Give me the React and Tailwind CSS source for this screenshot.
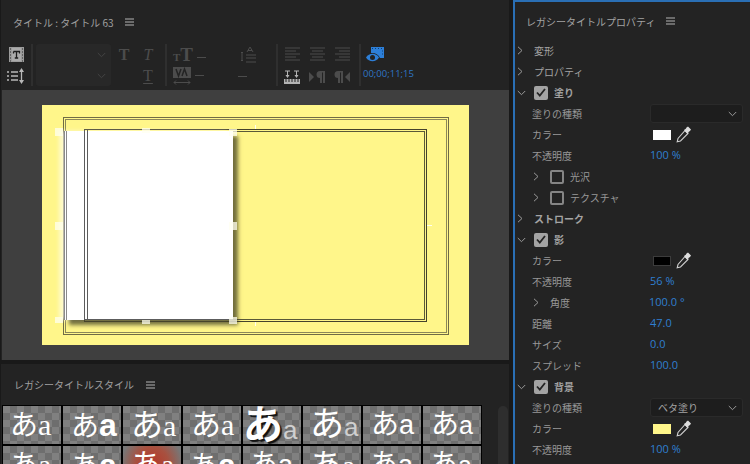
import React from 'react';

const JP = { fontFamily: '"Noto Sans CJK JP", "Noto Sans", sans-serif' };
const OPEN = { fontFamily: '"Open Sans", sans-serif' };
const SERIF = { fontFamily: '"Liberation Serif", serif' };

const Menu = () => (
  <svg width="9" height="8" viewBox="0 0 9 8" className="shrink-0">
    <path d="M0 1h9M0 4h9M0 7h9" stroke="#b4b4b4" strokeWidth="1" fill="none" />
  </svg>
);

const ChevronRight = ({ className = '' }) => (
  <svg width="6" height="9" viewBox="0 0 6 9" className={className}>
    <path d="M1 .8l4 3.7-4 3.7" stroke="#9a9a9a" strokeWidth="1" fill="none" />
  </svg>
);

const ChevronDown = ({ className = '', color = '#9a9a9a' }) => (
  <svg width="9" height="6" viewBox="0 0 9 6" className={className}>
    <path d="M.8 1l3.700 3.700L8.200 1" stroke={color} strokeWidth="1" fill="none" />
  </svg>
);

const Checkbox = () => (
  <span className="w-[14px] h-[14px] rounded-[2px] bg-[#a3a3a3] flex items-center justify-center shrink-0">
    <svg width="10" height="9" viewBox="0 0 10 9">
      <path d="M1 4.500l2.800 3L9 1" stroke="#232323" strokeWidth="1.800" fill="none" />
    </svg>
  </span>
);

const EmptyBox = () => (
  <span className="w-[14px] h-[14px] rounded-[2px] border-2 border-[#858585] shrink-0" />
);

const Eyedropper = () => (
  <svg width="16" height="17" viewBox="0 0 16 17" className="ml-[5px] shrink-0">
    <path d="M9 4.500l3 3-7.500 7.500-3.300 .8.800-3.300z" stroke="#cfcfcf" strokeWidth="1.100" fill="#232323" />
    <path d="M8 4l1.800-1.300.7-1.200 1.500-1 3 3-1 1.500-1.200.7L11.500 8z" fill="#dcdcdc" />
  </svg>
);

// one row of the property panel, 21px high
const Row = ({ children }) => <div className="h-[21px] flex items-center relative">{children}</div>;

const Label = ({ children, indent = 'pl-[17px]' }) => (
  <span className={`${indent} w-[135px] shrink-0 text-[10px] text-[#989898] whitespace-nowrap`}>{children}</span>
);

const Value = ({ children }) => (
  <span className="text-[11px] text-[#2f7fd0]" style={OPEN}>{children}</span>
);

const Section = ({ children, open, bold }) => (
  <Row>
    {open ? <ChevronDown className="ml-[2px] mr-[8px]" /> : <ChevronRight className="ml-[2px] mr-[11px]" />}
    <span className={`text-[10px] whitespace-nowrap text-[#a4a4a4] ${bold ? 'font-bold' : ''}`}>{children}</span>
  </Row>
);

const CheckSection = ({ children }) => (
  <Row>
    <ChevronDown className="ml-[2px] mr-[8px]" />
    <Checkbox />
    <span className="ml-[6px] text-[10px] font-bold text-[#a0a0a0]">{children}</span>
  </Row>
);

const SubCheck = ({ children }) => (
  <Row>
    <ChevronRight className="ml-[18px] mr-[11px]" />
    <EmptyBox />
    <span className="ml-[6px] text-[10px] text-[#989898]">{children}</span>
  </Row>
);

const Select = ({ children }) => (
  <div className="w-[93px] h-[19px] rounded-[3px] bg-[#1d1d1d] border border-[#2a2a2a] flex items-center justify-between pl-[7px] pr-[5px]">
    <span className="text-[10px] text-[#a4a4a4]">{children}</span>
    <ChevronDown />
  </div>
);

const ColorRow = ({ swatch }) => (
  <Row>
    <Label>カラー</Label>
    <span className={`ml-[3px] w-[18px] h-[10px] ${swatch}`} />
    <Eyedropper />
  </Row>
);

const ValueRow = ({ label, value }) => (
  <Row>
    <Label>{label}</Label>
    <Value>{value}</Value>
  </Row>
);

const Properties = () => (
  <aside className="w-[237px] h-[464px] overflow-hidden shrink-0 bg-[#232323] border-l-2 border-t-2 border-[#2a6fb5]" style={JP}>
    <div className="h-[38px] flex items-center pl-[11px] gap-[11px]">
      <span className="text-[10px] text-[#a4a4a4] whitespace-nowrap">レガシータイトルプロパティ</span>
      <Menu />
    </div>
    <Section>変形</Section>
    <Section>プロパティ</Section>
    <CheckSection>塗り</CheckSection>
    <Row><Label>塗りの種類</Label><Select /></Row>
    <ColorRow swatch="bg-white" />
    <ValueRow label="不透明度" value="100 %" />
    <SubCheck>光沢</SubCheck>
    <SubCheck>テクスチャ</SubCheck>
    <Section bold>ストローク</Section>
    <CheckSection>影</CheckSection>
    <ColorRow swatch="bg-black border border-[#3c3c3c]" />
    <ValueRow label="不透明度" value="56 %" />
    <Row>
      <ChevronRight className="ml-[18px] mr-[11px]" />
      <span className="w-[99px] text-[10px] text-[#989898]">角度</span>
      <Value>100.0 °</Value>
    </Row>
    <ValueRow label="距離" value="47.0" />
    <ValueRow label="サイズ" value="0.0" />
    <ValueRow label="スプレッド" value="100.0" />
    <CheckSection>背景</CheckSection>
    <Row><Label>塗りの種類</Label><Select>ベタ塗り</Select></Row>
    <ColorRow swatch="bg-[#fff68a]" />
    <ValueRow label="不透明度" value="100 %" />
    <SubCheck>{''}</SubCheck>
  </aside>
);

const AlignLines = ({ d }) => (
  <svg width="15" height="14" viewBox="0 0 15 14">
    <path d={d} stroke="#4c4c4c" strokeWidth="1" fill="none" />
  </svg>
);

const Divider = ({ className = '' }) => <div className={`w-[2px] h-[42px] bg-[#2f2f2f] shrink-0 ${className}`} />;

const Toolbar = () => (
  <div className="h-[46px] flex items-start pl-[6px]">
    {/* film + list */}
    <div className="w-[18px] shrink-0 flex flex-col items-center pt-[3px] gap-[6px]">
      <svg width="15" height="15" viewBox="0 0 15 15">
        <rect width="15" height="15" fill="#9c9c9c" />
        <rect x="3" y="1" width="9" height="13" fill="#ababab" />
        <path d="M4.500 4.500h6v2M4.500 4.500v2M7.500 4.500v6.500M5.800 11h3.400" stroke="#1d1d1d" strokeWidth="1.300" fill="none" />
        <path d="M1 2h1M1 5h1M1 8h1M1 11h1M1 14h1M13 2h1M13 5h1M13 8h1M13 11h1M13 14h1" stroke="#2a2a2a" strokeWidth="1.200" />
      </svg>
      <svg width="18" height="16" viewBox="0 0 18 16">
        <path d="M0 4h2M0 8h2M0 12h2M4 4h7M4 8h7M4 12h7M14.500 2v12" stroke="#b8b8b8" strokeWidth="1.300" fill="none" />
        <path d="M12 4l2.500-4L17 4zM12 12l2.500 4 2.500-4z" fill="#b8b8b8" />
      </svg>
    </div>
    <Divider className="ml-[6px]" />
    <div className="ml-[3px] w-[75px] h-[42px] shrink-0 rounded-[3px] bg-[#282828] flex flex-col justify-around items-end pr-[5px]">
      <ChevronDown color="#444444" />
      <ChevronDown color="#444444" />
    </div>
    <div className="w-[48px] shrink-0 ml-[1px] grid grid-cols-2 text-center text-[16px] font-bold leading-[21px] text-[#4c4c4c]" style={SERIF}>
      <span>T</span>
      <span className="italic font-normal">T</span>
      <span />
      <span className="font-normal underline underline-offset-[2px]">T</span>
    </div>
    <Divider className="ml-[5px]" />
    <div className="ml-[6px] w-[40px] shrink-0 flex flex-col gap-[3px]">
      <div className="flex items-end h-[19px] font-bold leading-none text-[#4c4c4c]" style={SERIF}>
        <span className="text-[11px]">T</span>
        <span className="text-[19px] leading-[17px]">T</span>
        <span className="ml-[4px] mb-[5px] w-[9px] h-[1px] bg-[#4c4c4c]" />
      </div>
      <div className="flex items-center h-[19px]">
        <svg width="18" height="18" viewBox="0 0 18 18">
          <rect width="18" height="11" fill="#4c4c4c" />
          <path d="M3 2l2.500 7L8 2M9 9l2.500-7L14 9" stroke="#232323" strokeWidth="1.500" fill="none" />
          <path d="M1 15.500h16M3 13.500l-2 2 2 2M15 13.500l2 2-2 2" stroke="#4c4c4c" fill="none" />
        </svg>
        <span className="ml-[4px] w-[9px] h-[1px] bg-[#4c4c4c]" />
      </div>
    </div>
    <div className="ml-[25px] w-[27px] shrink-0 flex flex-col items-start">
      <svg width="16" height="18" viewBox="0 0 16 18" className="ml-[3px] mt-[1px]">
        <path d="M1 7v9M0 8l1-1 1 1M0 15l1 1 1-1M6 7l3-5 3 5M7 5.500h4M5 10h10M5 13h10M5 17h10" stroke="#4c4c4c" fill="none" />
      </svg>
      <span className="w-[9px] h-[1px] bg-[#4c4c4c] mt-[13px]" />
    </div>
    <Divider className="ml-[11px]" />
    <div className="ml-[7px] w-[73px] shrink-0 grid grid-cols-[25px_25px_23px] gap-y-[9px] pt-[3px]">
      <AlignLines d="M0 1h15M0 4h11M0 7h15M0 10h11M0 13h15" />
      <AlignLines d="M0 1h15M2 4h11M0 7h15M2 10h11M0 13h15" />
      <AlignLines d="M0 1h15M4 4h11M0 7h15M4 10h11M0 13h15" />
      <svg width="16" height="14" viewBox="0 0 16 14" className="-ml-px">
        <path d="M0 9h16v5H0z" fill="#b4b4b4" />
        <path d="M2 9v3M5 9v3M8 9v3M11 9v3M14 9v3" stroke="#232323" />
        <path d="M1 1h5M3.500 1v5M10 1h5M12.500 1v5" stroke="#b4b4b4" fill="none" />
        <path d="M1.500 5h4l-2 3zM10.500 5h4l-2 3z" fill="#b4b4b4" />
      </svg>
      <svg width="16" height="12" viewBox="0 0 16 12" className="mt-[1px] -ml-px">
        <path d="M0 1l5 5-5 5z" fill="#4c4c4c" />
        <path d="M11 0h5v12h-2V1.500h-1V12h-2V7a3.500 3.500 0 0 1 0-7z" fill="#4c4c4c" />
      </svg>
      <svg width="16" height="12" viewBox="0 0 16 12" className="mt-[1px] -ml-px">
        <path d="M4 0h5v12H7V1.500H6V12H4V7a3.500 3.500 0 0 1 0-7z" fill="#4c4c4c" />
        <path d="M16 1l-5 5 5 5z" fill="#4c4c4c" />
      </svg>
    </div>
    <Divider className="ml-[1px]" />
    <div className="ml-[2px] flex flex-col pt-[3px]">
      <svg width="18" height="15" viewBox="0 0 18 15" className="ml-[3px]">
        <path d="M5 0h13v11H14a9 9 0 0 0-9-5z" fill="#2d7fd8" />
        <path d="M6 1.500h1M9 1.500h1M12 1.500h1M15 1.500h1M16 4h1M16 7h1" stroke="#0f3f73" />
        <path d="M0 10.500c3-5 10-5 13 0-3 5-10 5-13 0z" fill="#2d7fd8" />
        <circle cx="6.500" cy="10.500" r="2.500" fill="#232323" />
      </svg>
      <span className="mt-[5px] text-[9.500px] leading-[14px] text-[#2f76c4] whitespace-nowrap" style={OPEN}>00;00;11;15</span>
    </div>
  </div>
);

const Handle = ({ className }) => <span className={`absolute w-[8px] bg-[#fffff0]/75 ${className}`} />;

const Preview = () => (
  <div className="h-[270px] bg-[#3f3f3f] ml-px pl-[40px] pt-[15px]">
    <div className="relative w-[427px] h-[240px] bg-[#fff68a]">
      {/* safe margins */}
      <div className="absolute left-[21px] top-[12px] w-[386px] h-[218px] border border-[#6f6b45] p-px">
        <div className="w-full h-full border border-[#8b8758]" />
      </div>
      <div className="absolute left-[42px] top-[24px] w-[343px] h-[193px] border border-[#45432c] p-px">
        <div className="w-full h-full border border-[#5a5838]" />
      </div>
      <span className="absolute left-[213px] top-[20px] w-px h-[4px] bg-[#fffff0]" />
      <span className="absolute left-[213px] top-[217px] w-px h-[4px] bg-[#fffff0]" />
      <span className="absolute left-[385px] top-[120px] w-[5px] h-px bg-[#fffff0]" />
      {/* the text box */}
      <div className="absolute left-[22px] top-[26px] w-[169px] h-[189px] bg-white shadow-[5px_5px_4px_rgba(60,58,30,0.72),-5px_0_4px_rgba(255,255,255,0.55)]">
        <div className="absolute left-[20px] -top-px bottom-0 w-[4px] border-x border-[#5c5c5c]" />
        <div className="absolute left-[20px] right-0 bottom-0 h-px bg-[#5c5c5c]" />
        <div className="absolute left-0 top-0 w-[3px] h-full border-x border-[#8a8a8a]" />
      </div>
      <Handle className="left-[13px] top-[23px] h-[8px]" />
      <Handle className="left-[100px] top-[23px] h-[5px]" />
      <Handle className="left-[187px] top-[24px] h-[7px]" />
      <Handle className="left-[13px] top-[117px] h-[8px]" />
      <Handle className="left-[187px] top-[117px] h-[8px] bg-[#d9d9d2]" />
      <Handle className="left-[13px] top-[212px] h-[6px]" />
      <Handle className="left-[100px] top-[215px] h-[4px] bg-[#d9d9d2]" />
      <Handle className="left-[187px] top-[212px] h-[7px] bg-[#d9d9d2]" />
    </div>
  </div>
);

const serifA = { fontFamily: '"Liberation Serif", serif' };
const sansA = { fontFamily: '"Liberation Sans", sans-serif' };
const kana = { fontFamily: '"Noto Sans CJK JP", "Noto Sans", sans-serif' };

const checker = {
  backgroundColor: '#777777',
  backgroundImage: 'conic-gradient(#6e6e6e 25%, #808080 0 50%, #6e6e6e 0 75%, #808080 0)',
  backgroundSize: '14px 14px',
};
const redGlow = {
  backgroundColor: '#777777',
  backgroundImage: 'radial-gradient(circle at 50% 45%, #b5392a 0%, #a8503f 45%, #777777 85%)',
};

// あ + a sample of a title style, baseline sits at the same height in all of them
const Thumb = ({ size = 28, a = 'text-[30px]', aStyle = serifA, pl = 'pl-[7px]', kanaClass = '', bg = checker }) => (
  <div className={`w-[58px] h-[38px] overflow-hidden flex items-baseline ${pl} leading-[38px] text-white`} style={bg}>
    <span className={`${kanaClass} -mt-[3px]`} style={{ ...kana, fontSize: size }}>あ</span>
    <span className={a} style={aStyle}>a</span>
  </div>
);

const StylePanel = () => (
  <div className="relative h-[100px] overflow-hidden">
    <div className="h-[41px] flex items-center pl-[13px] gap-[12px]">
      <span className="text-[10px] text-[#a0a0a0] whitespace-nowrap" style={JP}>レガシータイトルスタイル</span>
      <Menu />
    </div>
    <div className="ml-px w-[480px] p-px bg-black grid grid-cols-[repeat(8,58px)] gap-[2px]">
      <Thumb />
      <Thumb pl="pl-[8px]" a="text-[32px] font-bold" aStyle={sansA} />
      <Thumb size={32} pl="pl-[8px]" />
      <Thumb size={30} pl="pl-[8px]" />
      <Thumb size={40} pl="pl-0" kanaClass="font-bold [text-shadow:2px_2px_1px_#111]" aStyle={sansA} a="text-[26px] font-light text-[#cfcfcf]" />
      <Thumb size={34} pl="pl-[7px]" aStyle={sansA} a="text-[26px] font-light text-[#cfcfcf]" />
      <Thumb size={28} pl="pl-[8px]" aStyle={sansA} a="text-[27px]" />
      <Thumb size={28} pl="pl-[8px]" aStyle={sansA} a="text-[25px]" />
      <Thumb />
      <Thumb pl="pl-[8px]" a="text-[32px] font-bold" aStyle={sansA} />
      <Thumb size={30} pl="pl-[8px]" bg={redGlow} />
      <Thumb a="text-[32px] font-bold" aStyle={sansA} />
      <Thumb size={28} aStyle={sansA} a="text-[27px]" />
      <Thumb size={32} />
      <Thumb size={28} aStyle={sansA} a="text-[27px]" />
      <Thumb size={28} aStyle={sansA} a="text-[25px]" />
    </div>
    <div className="absolute left-[497px] top-[42px] w-[10px] h-[70px] rounded-[5px] bg-[#2e2e2e]" />
  </div>
);

export default function App() {
  return (
    <div className="w-[750px] h-[464px] overflow-hidden bg-[#191919] flex" style={JP}>
      <div className="w-[508px] shrink-0 ml-px mr-[4px]">
        <div className="bg-[#232323] h-[360px]">
          <div className="h-[44px] flex items-center pl-[12px] gap-[11px]">
            <span className="text-[10px] text-[#a0a0a0] whitespace-pre">タイトル : タイトル 63</span>
            <Menu />
          </div>
          <Toolbar />
          <Preview />
        </div>
        <div className="h-[4px]" />
        <div className="bg-[#232323] h-[100px]">
          <StylePanel />
        </div>
      </div>
      <Properties />
    </div>
  );
}
